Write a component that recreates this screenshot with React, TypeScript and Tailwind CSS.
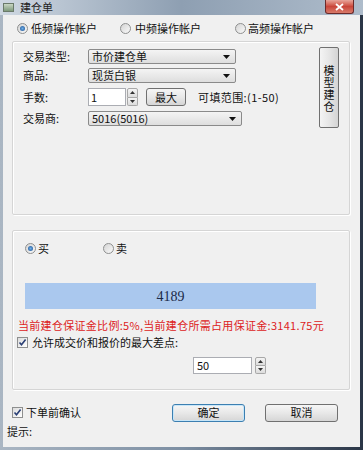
import React from "react";

function Radio({ checked }: { checked?: boolean }) {
  return (
    <span className="inline-flex h-[11px] w-[11px] shrink-0 items-center justify-center rounded-full border border-[#8e8f8f] bg-linear-to-br from-[#d4d4d4] to-[#fafafa]">
      {checked && (
        <span className="h-[5px] w-[5px] rounded-full bg-radial from-[#6fb0e8] to-[#1c4f91]" />
      )}
    </span>
  );
}

function Check() {
  return (
    <span className="inline-flex h-[11px] w-[11px] shrink-0 items-center justify-center border border-[#8e8f8f] bg-linear-to-br from-[#dcdcdc] to-[#ffffff]">
      <svg width="9" height="9" viewBox="0 0 9 9">
        <path d="M1.5 4.5 L3.5 6.8 L7.6 1.6" fill="none" stroke="#2a3f75" strokeWidth="1.6" />
      </svg>
    </span>
  );
}

function Combo({ text, w }: { text: string; w: string }) {
  return (
    <div
      className={`flex h-[15px] items-center rounded-[2px] border border-[#8a8a8a] bg-linear-to-b from-[#f4f4f4] to-[#dedede] pl-[3px] pr-[5px] ${w}`}
    >
      <span className="flex-1 leading-none">{text}</span>
      <svg width="7" height="4" viewBox="0 0 7 4">
        <path d="M0 0 H7 L3.5 4 Z" fill="#111" />
      </svg>
    </div>
  );
}

function SpinArrows({ h }: { h: string }) {
  return (
    <div className={`flex w-[11px] flex-col ${h}`}>
      <div className="flex flex-1 items-center justify-center rounded-t-[2px] border border-[#a8a8a8] bg-linear-to-b from-[#f4f4f4] to-[#dcdcdc]">
        <svg width="5" height="3" viewBox="0 0 5 3">
          <path d="M0 3 H5 L2.5 0 Z" fill="#333" />
        </svg>
      </div>
      <div className="flex flex-1 items-center justify-center rounded-b-[2px] border border-t-0 border-[#a8a8a8] bg-linear-to-b from-[#f4f4f4] to-[#dcdcdc]">
        <svg width="5" height="3" viewBox="0 0 5 3">
          <path d="M0 0 H5 L2.5 3 Z" fill="#333" />
        </svg>
      </div>
    </div>
  );
}

function Button({ children, w, primary }: { children: React.ReactNode; w: string; primary?: boolean }) {
  return (
    <div
      className={`flex h-[18px] items-center justify-center rounded-[3px] border bg-linear-to-b from-[#f6f6f6] via-[#e8e8e8] to-[#d6d6d6] ${
        primary ? "border-[#3c7fb1] shadow-[inset_0_0_0_1px_#c8e6f8]" : "border-[#707070]"
      } ${w}`}
    >
      {children}
    </div>
  );
}

export default function App() {
  return (
    <div className="flex h-[450px] w-[363px] flex-col bg-linear-to-r from-[#aab6c3] via-[#7d8fa3] to-[#2b3647] font-['Noto_Sans_CJK_SC','Liberation_Sans',sans-serif] text-[11px] text-[#111]">
      {/* title bar */}
      <div className="flex h-[15px] items-center bg-linear-to-r from-[#cfd8e2] via-[#8e9fb2] to-[#aebccb]">
        <span className="ml-[3px] h-[9px] w-[11px] border border-[#6a7a6a] bg-linear-to-b from-[#c9d7c4] to-[#7f9a7c]" />
        <span className="ml-[6px] leading-none text-[#222]">建仓单</span>
        <div className="ml-auto mr-[9px] flex h-[14px] w-[29px] items-center justify-center self-start rounded-b-[3px] border border-t-0 border-[#6b2a2a] bg-linear-to-b from-[#e7a59b] via-[#c9453a] to-[#d87a6a]">
          <svg width="9" height="8" viewBox="0 0 9 8">
            <path d="M1 1 L8 7 M8 1 L1 7" stroke="#fff" strokeWidth="1.8" />
          </svg>
        </div>
      </div>

      {/* body */}
      <div className="ml-[3px] flex h-[432px] w-[357px] flex-col bg-[#f0f0f0]">
        {/* account radios */}
        <div className="mt-[6px] flex h-[14px] items-center">
          <div className="ml-[14px] flex w-[103px] items-center gap-[3px]">
            <Radio checked />
            <span className="leading-none">低频操作帐户</span>
          </div>
          <div className="flex w-[115px] items-center gap-[4px]">
            <Radio />
            <span className="leading-none">中频操作帐户</span>
          </div>
          <div className="flex items-center gap-[2px]">
            <Radio />
            <span className="leading-none">高频操作帐户</span>
          </div>
        </div>

        {/* group 1 */}
        <div className="ml-[9px] mt-[6px] flex h-[174px] w-[338px] rounded-[2px] border border-[#d5d5d5] shadow-[inset_1px_1px_0_#fff,1px_1px_0_#fff]">
          <div className="flex flex-col pl-[10px]">
            <div className="mt-[7px] flex items-center">
              <span className="w-[65px] leading-none">交易类型:</span>
              <Combo text="市价建仓单" w="w-[148px]" />
            </div>
            <div className="mt-[4px] flex items-center">
              <span className="w-[65px] leading-none">商品:</span>
              <Combo text="现货白银" w="w-[148px]" />
            </div>
            <div className="mt-[5px] flex items-center">
              <span className="w-[65px] leading-none">手数:</span>
              <div className="flex h-[18px] w-[38px] items-center border border-[#abadb3] bg-white pl-[2px] leading-none">
                1
              </div>
              <div className="ml-[1px]">
                <SpinArrows h="h-[18px]" />
              </div>
              <div className="ml-[8px]">
                <Button w="w-[40px]">最大</Button>
              </div>
              <span className="ml-[12px] leading-none tracking-[0.4px]">可填范围:(1-50)</span>
            </div>
            <div className="mt-[5px] flex items-center">
              <span className="w-[65px] leading-none">交易商:</span>
              <Combo text="5016(5016)" w="w-[154px]" />
            </div>
          </div>
          <div className="ml-auto mr-[10px] mt-[5px] flex h-[81px] w-[20px] items-center justify-center rounded-[2px] border border-[#707070] bg-linear-to-r from-[#f4f4f4] via-[#e6e6e6] to-[#d4d4d4]">
            <span className="w-[11px] leading-[12px]">模型建仓</span>
          </div>
        </div>

        {/* group 2 */}
        <div className="ml-[9px] mt-[15px] flex h-[160px] w-[338px] flex-col rounded-[2px] border border-[#d5d5d5] shadow-[inset_1px_1px_0_#fff,1px_1px_0_#fff]">
          <div className="mt-[11px] flex h-[12px] items-center">
            <div className="ml-[12px] flex w-[78px] items-center gap-[2px]">
              <Radio checked />
              <span className="leading-none">买</span>
            </div>
            <div className="flex items-center gap-[2px]">
              <Radio />
              <span className="leading-none">卖</span>
            </div>
          </div>
          <div className="ml-[12px] mt-[29px] flex h-[26px] w-[291px] items-center justify-center bg-[#aac8ee] font-['Liberation_Serif',serif] text-[14px] text-[#1b2a48]">
            4189
          </div>
          <div className="ml-[5px] mt-[9px] flex h-[14px] items-center whitespace-nowrap tracking-[0.3px] text-[#dd2222]">
            当前建仓保证金比例:5%,当前建仓所需占用保证金:3141.75元
          </div>
          <div className="ml-[4px] mt-[3px] flex h-[14px] items-center gap-[4px]">
            <Check />
            <span className="leading-none">允许成交价和报价的最大差点:</span>
          </div>
          <div className="ml-[180px] mt-[8px] flex items-center">
            <div className="flex h-[17px] w-[59px] items-center border border-[#abadb3] bg-white pl-[3px] leading-none">
              50
            </div>
            <div className="ml-[3px]">
              <SpinArrows h="h-[17px]" />
            </div>
          </div>
        </div>

        {/* bottom */}
        <div className="mt-[13px] flex h-[19px] items-center">
          <div className="ml-[9px] flex w-[160px] items-center gap-[3px]">
            <Check />
            <span className="leading-none">下单前确认</span>
          </div>
          <Button w="w-[73px]" primary>
            确定
          </Button>
          <div className="ml-[20px]">
            <Button w="w-[73px]">取消</Button>
          </div>
        </div>
        <div className="ml-[4px] mt-[4px] leading-none">提示:</div>
      </div>
    </div>
  );
}
